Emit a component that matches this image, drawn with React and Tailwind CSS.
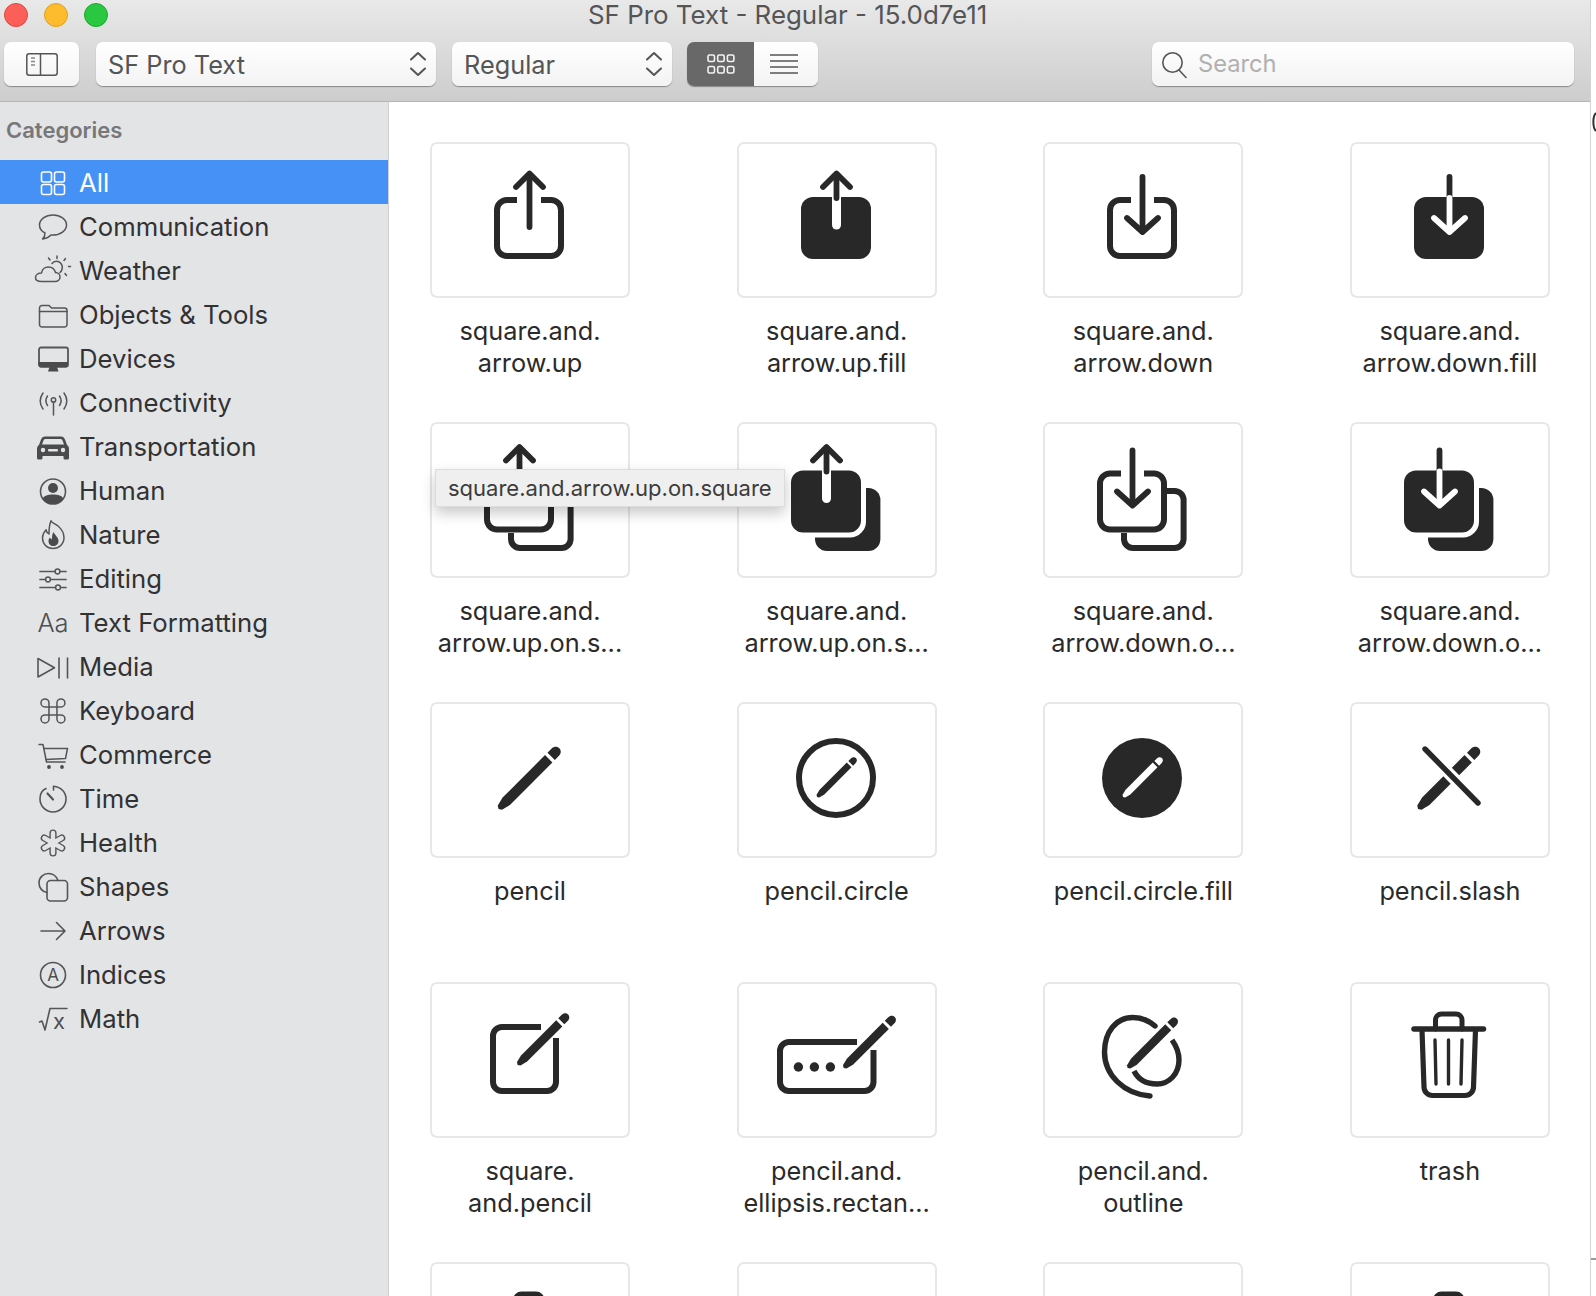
import React from "react";

const INK = "#282828";
const SIDE_BG = "#e3e4e6";

function Pencil({ x, y, s = 1, color = INK }) {
  return (
    <g transform={`translate(${x} ${y}) rotate(-45) scale(${s})`} fill={color}>
      <path d="M0 0 L2 -3 L11 -5.2 H71 V5.2 H11 L2 3 Z" />
      <path d="M74.5 -5.2 H80 C84 -5.2 86 -2.5 86 0 C86 2.5 84 5.2 80 5.2 H74.5 Z" />
    </g>
  );
}

function OpenSquare({ gapL, gapR }) {
  return (
    <path
      d={`M${gapL} 58 H77 a10 10 0 0 0 -10 10 V104 a10 10 0 0 0 10 10 H121 a10 10 0 0 0 10 -10 V68 a10 10 0 0 0 -10 -10 H${gapR}`}
      fill="none"
      stroke={INK}
      strokeWidth="6"
    />
  );
}

function ArrowUp({ color = INK }) {
  return (
    <g fill="none" stroke={color} strokeWidth="5.8" strokeLinecap="round" strokeLinejoin="round">
      <path d="M99.5 85 V33" />
      <path d="M86 45 L99.5 31.5 L113 45" />
    </g>
  );
}

function ArrowDown({ color = INK, stemTop = 35 }) {
  return (
    <g fill="none" stroke={color} strokeWidth="5.8" strokeLinecap="round" strokeLinejoin="round">
      <path d={`M99.5 ${stemTop} V88`} />
      <path d="M84 76 L99.5 90 L115 76" />
    </g>
  );
}

function UpFill() {
  return (
    <g>
      <rect x="64" y="55" width="70" height="62" rx="12" fill={INK} />
      <path d="M99.5 50 V83" stroke="#fff" strokeWidth="9" strokeLinecap="round" />
      <path d="M99.5 56 V34" stroke={INK} strokeWidth="5.8" strokeLinecap="round" />
      <path d="M86 45 L99.5 31.5 L113 45" fill="none" stroke={INK} strokeWidth="5.8" strokeLinecap="round" strokeLinejoin="round" />
    </g>
  );
}

function DownFill() {
  return (
    <g>
      <rect x="64" y="55" width="70" height="62" rx="12" fill={INK} />
      <path d="M99.5 35 V55" stroke={INK} strokeWidth="5.8" strokeLinecap="round" />
      <path d="M99.5 56 V88" stroke="#fff" strokeWidth="5.8" strokeLinecap="round" />
      <path d="M84 76 L99.5 90 L115 76" fill="none" stroke="#fff" strokeWidth="5.8" strokeLinecap="round" strokeLinejoin="round" />
    </g>
  );
}

function BackOutline() {
  return (
    <path
      d="M81 111 V117 a9 9 0 0 0 9 9 H131.6 a9 9 0 0 0 9 -9 V78 a9 9 0 0 0 -9 -9 H124"
      fill="none"
      stroke={INK}
      strokeWidth="6"
    />
  );
}

function BackFill() {
  return (
    <g>
      <rect x="78" y="66" width="65.4" height="63" rx="12" fill={INK} />
      <rect x="49.5" y="43.5" width="79.5" height="72" rx="16" fill="#fff" />
    </g>
  );
}

function Trash() {
  return (
    <g fill="none" stroke={INK} strokeLinecap="round">
      <path d="M85.5 47 V38 a6 6 0 0 1 6 -6 H106 a6 6 0 0 1 6 6 V47" strokeWidth="5" />
      <path d="M64 47 H133.5" strokeWidth="5.5" />
      <path d="M72 48 L74 105 a8.5 8.5 0 0 0 8.5 8.5 H115 a8.5 8.5 0 0 0 8.5 -8.5 L125.5 48" strokeWidth="5.2" />
      <path d="M85 58 L86 102 M98.5 58 V102 M112 58 L111 102" strokeWidth="3.4" />
    </g>
  );
}

const cards = [
  {
    lines: ["square.and.", "arrow.up"],
    icon: (
      <g>
        <OpenSquare gapL={87} gapR={111} />
        <ArrowUp />
      </g>
    ),
  },
  { lines: ["square.and.", "arrow.up.fill"], icon: <UpFill /> },
  {
    lines: ["square.and.", "arrow.down"],
    icon: (
      <g>
        <OpenSquare gapL={88} gapR={111} />
        <ArrowDown />
      </g>
    ),
  },
  { lines: ["square.and.", "arrow.down.fill"], icon: <DownFill /> },
  {
    lines: ["square.and.", "arrow.up.on.s..."],
    icon: (
      <g>
        <BackOutline />
        <g transform="translate(-10 -6.5)">
          <OpenSquare gapL={87} gapR={111} />
          <ArrowUp />
        </g>
      </g>
    ),
  },
  {
    lines: ["square.and.", "arrow.up.on.s..."],
    icon: (
      <g>
        <BackFill />
        <g transform="translate(-10 -6.5)">
          <UpFill />
        </g>
      </g>
    ),
  },
  {
    lines: ["square.and.", "arrow.down.o..."],
    icon: (
      <g>
        <BackOutline />
        <g transform="translate(-10 -6.5)">
          <OpenSquare gapL={88} gapR={111} />
          <ArrowDown />
        </g>
      </g>
    ),
  },
  {
    lines: ["square.and.", "arrow.down.o..."],
    icon: (
      <g>
        <BackFill />
        <g transform="translate(-10 -6.5)">
          <DownFill />
        </g>
      </g>
    ),
  },
  { lines: ["pencil"], icon: <Pencil x={68.5} y={107} /> },
  {
    lines: ["pencil.circle"],
    icon: (
      <g>
        <circle cx="99" cy="76" r="37" fill="none" stroke={INK} strokeWidth="6" />
        <Pencil x={80} y={95} s={0.64} />
      </g>
    ),
  },
  {
    lines: ["pencil.circle.fill"],
    icon: (
      <g>
        <circle cx="99" cy="76" r="40" fill={INK} />
        <Pencil x={80} y={95} s={0.64} color="#fff" />
      </g>
    ),
  },
  {
    lines: ["pencil.slash"],
    icon: (
      <g>
        <Pencil x={68} y={107} />
        <path d="M75 47 L128 101" stroke="#fff" strokeWidth="12" />
        <path d="M75 47 L128 101" stroke={INK} strokeWidth="5.4" strokeLinecap="round" />
      </g>
    ),
  },
  {
    lines: ["square.", "and.pencil"],
    icon: (
      <g>
        <path
          d="M111 45 H72 a9 9 0 0 0 -9 9 V100 a9 9 0 0 0 9 9 H117 a9 9 0 0 0 9 -9 V56"
          fill="none"
          stroke={INK}
          strokeWidth="6"
        />
        <Pencil x={87.6} y={83} s={0.83} />
      </g>
    ),
  },
  {
    lines: ["pencil.and.", "ellipsis.rectan..."],
    icon: (
      <g>
        <path
          d="M120 60 H52 a9 9 0 0 0 -9 9 V100 a9 9 0 0 0 9 9 H127.5 a9 9 0 0 0 9 -9 V68"
          fill="none"
          stroke={INK}
          strokeWidth="6"
        />
        <circle cx="61.4" cy="85" r="4.7" fill={INK} />
        <circle cx="77.4" cy="85" r="4.7" fill={INK} />
        <circle cx="93.4" cy="85" r="4.7" fill={INK} />
        <Pencil x={106.6} y={86} s={0.84} />
      </g>
    ),
  },
  {
    lines: ["pencil.and.", "outline"],
    icon: (
      <g>
        <path
          d="M112 44 C105 38 97 35.5 90 35.5 C73 35.5 61.5 50 61.5 70 C61.5 93 81 112 107 114"
          fill="none"
          stroke={INK}
          strokeWidth="5.4"
          strokeLinecap="round"
        />
        <path
          d="M129 58 C134 65 136 71 136 78 C136 92 126 102 114 102 C103 102 95 97 91 89"
          fill="none"
          stroke={INK}
          strokeWidth="5.4"
        />
        <Pencil x={84.6} y={86} s={0.81} />
      </g>
    ),
  },
  { lines: ["trash"], icon: <Trash /> },
  { lines: [""], icon: <Trash /> },
  { lines: [""], icon: null },
  { lines: [""], icon: null },
  { lines: [""], icon: <Trash /> },
];

function SideIcon({ children, fill = "none" }) {
  return (
    <svg
      viewBox="0 0 36 28"
      className="w-[36px] h-[28px] shrink-0 overflow-visible"
      fill={fill}
      stroke="#555557"
      strokeWidth="1.5"
      strokeLinecap="round"
      strokeLinejoin="round"
    >
      {children}
    </svg>
  );
}

const categories = [
  {
    name: "All",
    active: true,
    icon: (
      <g stroke="#fff" strokeWidth="1.6">
        <rect x="6.5" y="3" width="10" height="10" rx="2" />
        <rect x="19.5" y="3" width="10" height="10" rx="2" />
        <rect x="6.5" y="15.5" width="10" height="10" rx="2" />
        <rect x="19.5" y="15.5" width="10" height="10" rx="2" />
      </g>
    ),
  },
  {
    name: "Communication",
    icon: <path d="M18 2 C10.5 2 4.5 6.5 4.5 12 C4.5 15.5 7 18.5 10 20 C10 22 9 24.5 7.5 26 C11 25.8 14 24 16 22 C16.6 22 17.4 22 18 22 C25.5 22 31.5 17.5 31.5 12 C31.5 6.5 25.5 2 18 2 Z" />,
  },
  {
    name: "Weather",
    icon: (
      <g>
        <path d="M6.5 24.5 H20 C23 24.5 25 22.5 25 20 C25 17.5 23 15.5 20.5 15.5 C19.5 12 16.5 10 13.5 10 C10 10 7 12.5 6.5 16 C3 16 0.5 18 0.5 20.5 C0.5 23 3 24.5 6.5 24.5 Z" />
        <path d="M17 6.5 C18.5 4.5 21 4 23 4.5 C26.5 5.5 28 9 27 12.5 C26.7 13.5 26 14.5 25 15.5" />
        <path d="M22 -1 V1.5 M13.5 1 L15 3 M30.5 1.5 L29 3.5 M33.5 9.5 H35.5 M30 16.5 L31.5 18.5" />
      </g>
    ),
  },
  {
    name: "Objects & Tools",
    icon: (
      <g>
        <path d="M4.5 7 a2.5 2.5 0 0 1 2.5 -2.5 h7 l2.5 2.5 h13 a2.5 2.5 0 0 1 2.5 2.5 v14 a2.5 2.5 0 0 1 -2.5 2.5 h-22.5 a2.5 2.5 0 0 1 -2.5 -2.5 Z" />
        <path d="M4.5 10.5 H32" />
      </g>
    ),
  },
  {
    name: "Devices",
    icon: (
      <g>
        <rect x="4" y="2.5" width="29" height="19" rx="2" strokeWidth="1.8" />
        <path d="M3.5 17 H33 V20 a2.5 2.5 0 0 1 -2.5 2.5 H6 a2.5 2.5 0 0 1 -2.5 -2.5 Z" fill="#4b4b4d" stroke="none" />
        <path d="M14.5 22 L13 26.5 H23.5 L22 22 Z" fill="#4b4b4d" stroke="none" />
      </g>
    ),
  },
  {
    name: "Connectivity",
    icon: (
      <g>
        <circle cx="18.5" cy="11" r="2.2" />
        <path d="M18.5 13 V26" />
        <path d="M12.5 7 C10.5 10 10.5 13.5 12.5 16.5 M24.5 7 C26.5 10 26.5 13.5 24.5 16.5" />
        <path d="M8 4 C4.5 9 4.5 15 8 20 M29 4 C32.5 9 32.5 15 29 20" />
      </g>
    ),
  },
  {
    name: "Transportation",
    icon: (
      <g stroke="none">
        <path d="M10 3.5 H26 C28 3.5 29 4.5 30 6.5 L32 12 C33.5 13 34 14.5 34 16 V25 a1.5 1.5 0 0 1 -1.5 1.5 H30 a1.5 1.5 0 0 1 -1.5 -1.5 V23 H7.5 V25 a1.5 1.5 0 0 1 -1.5 1.5 H3.5 a1.5 1.5 0 0 1 -1.5 -1.5 V16 C2 14.5 2.5 13 4 12 L6 6.5 C7 4.5 8 3.5 10 3.5 Z" fill="#4b4b4d" />
        <path d="M10.5 6 H25.5 C26.5 6 27 6.5 27.5 7.5 L29 11.5 H7 L8.5 7.5 C9 6.5 9.5 6 10.5 6 Z" fill={SIDE_BG} />
        <circle cx="8" cy="17" r="2.2" fill={SIDE_BG} />
        <circle cx="28" cy="17" r="2.2" fill={SIDE_BG} />
        <rect x="13" y="16" width="10" height="2.5" rx="1" fill={SIDE_BG} />
      </g>
    ),
  },
  {
    name: "Human",
    icon: (
      <g>
        <circle cx="18" cy="14.5" r="12.5" strokeWidth="1.6" />
        <circle cx="18" cy="11" r="5" fill="#4b4b4d" stroke="none" />
        <path d="M7.5 22 C9 18.5 13 17.5 18 17.5 C23 17.5 27 18.5 28.5 22 C26 25.5 22 27 18 27 C14 27 10 25.5 7.5 22 Z" fill="#4b4b4d" stroke="none" />
      </g>
    ),
  },
  {
    name: "Nature",
    icon: (
      <g>
        <path d="M16 0 C17 2 20 2.5 23 5 C26.5 8 29 11.5 29 16.5 C29 23 24 27.5 18 27.5 C12 27.5 7.5 23 7.5 17 C7.5 13.5 9 11 11 9" />
        <path d="M11 9 C11.5 11 12.5 12 14 13 C14 8 14 4 16 0" />
        <path d="M18.5 11 C19.5 14 23.5 16 23.5 20 C23.5 23 21 25 18.5 25 C15.5 25 13.5 23 13.5 20 C13.5 18.5 14 17.5 15 16.5 C15.5 17.5 16 18 17 18.5 C17 16 17 13 18.5 11 Z" fill="#4b4b4d" stroke="none" />
      </g>
    ),
  },
  {
    name: "Editing",
    icon: (
      <g>
        <path d="M5 6.5 H31 M5 14.5 H31 M5 22.5 H31" strokeWidth="1.7" />
        <circle cx="22.5" cy="6.5" r="2.4" fill={SIDE_BG} />
        <circle cx="13" cy="14.5" r="2.4" fill={SIDE_BG} />
        <circle cx="23" cy="22.5" r="2.4" fill={SIDE_BG} />
      </g>
    ),
  },
  {
    name: "Text Formatting",
    icon: (
      <text x="18" y="23" textAnchor="middle" fontFamily="Inter, sans-serif" fontSize="25.5" fontWeight="300" fill="#4f4f52" stroke="none">
        Aa
      </text>
    ),
  },
  {
    name: "Media",
    icon: (
      <g strokeWidth="1.6">
        <path d="M3 5.5 V24 L19.5 14.7 Z" />
        <path d="M24 5 V25 M32.5 5 V25" />
      </g>
    ),
  },
  {
    name: "Keyboard",
    icon: (
      <g transform="translate(2 -2) scale(1.33)" strokeWidth="1.15">
        <path d="M15 6v12a3 3 0 1 0 3-3H6a3 3 0 1 0 3 3V6a3 3 0 1 0-3 3h12a3 3 0 1 0-3-3" />
      </g>
    ),
  },
  {
    name: "Commerce",
    icon: (
      <g>
        <path d="M4 3.5 H8 L11.5 21 H30" />
        <path d="M9 7.5 H32.5 L30.5 17.5 L11 18.5" />
        <circle cx="14" cy="26" r="1.9" fill="#4b4b4d" stroke="none" />
        <circle cx="27" cy="26" r="1.9" fill="#4b4b4d" stroke="none" />
      </g>
    ),
  },
  {
    name: "Time",
    icon: (
      <g strokeWidth="1.6">
        <path d="M11 3.5 C6.5 5.5 5 10 5 14 C5 21 10.8 27 18 27 C25.2 27 31 21 31 14 C31 7.5 26.5 2 18.5 1.2 V5" />
        <path d="M18 14.5 L12.5 8.5" strokeWidth="2.2" />
      </g>
    ),
  },
  {
    name: "Health",
    icon: (
      <g fill="none">
        <g stroke="#555557" strokeWidth="7.2">
          <path d="M18 4 V24 M9.3 9 L26.7 19 M26.7 9 L9.3 19" />
        </g>
        <g stroke={SIDE_BG} strokeWidth="4.4">
          <path d="M18 4 V24 M9.3 9 L26.7 19 M26.7 9 L9.3 19" />
        </g>
      </g>
    ),
  },
  {
    name: "Shapes",
    icon: (
      <g strokeWidth="1.6">
        <path d="M12 19.5 C7.5 18.8 4 15 4 10 C4 4.5 8.5 0.5 13.5 0.5 C18 0.5 21.5 3.5 23 7.5" />
        <rect x="12" y="7.5" width="20.5" height="20.5" rx="3.5" />
      </g>
    ),
  },
  {
    name: "Arrows",
    icon: <path d="M6 14 H30 M21.5 5.5 L30 14 L21.5 22.5" strokeWidth="1.6" />,
  },
  {
    name: "Indices",
    icon: (
      <g>
        <circle cx="18" cy="14" r="12.5" strokeWidth="1.6" />
        <text x="18" y="20" textAnchor="middle" fontFamily="Inter, sans-serif" fontSize="17" fill="#4f4f52" stroke="none">
          A
        </text>
      </g>
    ),
  },
  {
    name: "Math",
    icon: (
      <g>
        <path d="M4.5 17 L7 16 L10 25 L15 3.5 H32" strokeWidth="1.6" />
        <text x="24" y="23.5" textAnchor="middle" fontFamily="Inter, sans-serif" fontSize="22" fill="#4f4f52" stroke="none">
          x
        </text>
      </g>
    ),
  },
];

function Chevrons() {
  return (
    <svg viewBox="0 0 18 24" className="w-[18px] h-[24px]" fill="none" stroke="#555" strokeWidth="2" strokeLinecap="round" strokeLinejoin="round">
      <path d="M2 7.5 L9 1 L16 7.5" />
      <path d="M2 16.5 L9 23 L16 16.5" />
    </svg>
  );
}

function SelectBox({ label, width }) {
  return (
    <div className={`${width} h-[44px] bg-gradient-to-b from-white to-[#f3f3f3] rounded-[7px] shadow-[0_1px_1px_rgba(0,0,0,0.35)] flex items-center justify-between pl-[12px] pr-[9px]`}>
      <span className="mt-[2px] text-[25.3px] text-[#555]">{label}</span>
      <Chevrons />
    </div>
  );
}

function Toolbar() {
  return (
    <div className="h-[102px] shrink-0 bg-gradient-to-b from-[#e9e9e9] to-[#cdcdcd] border-b border-[#b4b4b4] flex flex-col">
      <div className="h-[30px] flex items-center pl-[4px] gap-[16px]">
        <span className="w-[24px] h-[24px] rounded-full bg-[#fc5f57] border border-[#e0443e]" />
        <span className="w-[24px] h-[24px] rounded-full bg-[#fdbc2e] border border-[#dea123]" />
        <span className="w-[24px] h-[24px] rounded-full bg-[#29c840] border border-[#1aab29]" />
        <span className="ml-[464px] text-[25.9px] leading-[30px] text-[#555] whitespace-nowrap">SF Pro Text - Regular - 15.0d7e11</span>
      </div>
      <div className="mt-[12px] flex items-center pl-[4px]">
        <div className="w-[75px] h-[44px] bg-gradient-to-b from-white to-[#f3f3f3] rounded-[7px] shadow-[0_1px_1px_rgba(0,0,0,0.35)] flex items-center justify-center">
          <svg viewBox="0 0 32 23" className="w-[32px] h-[23px]" fill="none" stroke="#555" strokeWidth="1.5">
            <rect x="0.8" y="0.8" width="30.4" height="21.4" rx="2.5" />
            <path d="M14.5 1 V22" />
            <path d="M5 5 H9 M5 8.5 H9 M5 12 H9" strokeWidth="1.6" stroke="#888" />
          </svg>
        </div>
        <div className="ml-[17px]">
          <SelectBox label="SF Pro Text" width="w-[340px]" />
        </div>
        <div className="ml-[16px]">
          <SelectBox label="Regular" width="w-[220px]" />
        </div>
        <div className="ml-[15px] w-[131px] h-[44px] flex rounded-[7px] shadow-[0_1px_1px_rgba(0,0,0,0.35)] overflow-hidden">
          <div className="w-[67px] bg-[#686868] flex items-center justify-center">
            <svg viewBox="0 0 28 20" className="w-[28px] h-[20px]" fill="none" stroke="#f2f2f2" strokeWidth="1.6">
              <rect x="1" y="1" width="6.5" height="6.5" rx="1.5" />
              <rect x="10.7" y="1" width="6.5" height="6.5" rx="1.5" />
              <rect x="20.4" y="1" width="6.5" height="6.5" rx="1.5" />
              <rect x="1" y="12.5" width="6.5" height="6.5" rx="1.5" />
              <rect x="10.7" y="12.5" width="6.5" height="6.5" rx="1.5" />
              <rect x="20.4" y="12.5" width="6.5" height="6.5" rx="1.5" />
            </svg>
          </div>
          <div className="flex-1 bg-gradient-to-b from-white to-[#f3f3f3] flex items-center justify-center pr-[4px]">
            <svg viewBox="0 0 28 20" className="w-[28px] h-[20px]" fill="none" stroke="#555" strokeWidth="1.6">
              <path d="M0 1 H28 M0 7 H28 M0 13 H28 M0 19 H28" />
            </svg>
          </div>
        </div>
        <div className="ml-[334px] w-[422px] h-[44px] bg-gradient-to-b from-white to-[#f3f3f3] rounded-[7px] shadow-[0_1px_1px_rgba(0,0,0,0.35)] flex items-center pl-[10px]">
          <svg viewBox="0 0 25 25" className="w-[25px] h-[25px] overflow-visible" fill="none" stroke="#555" strokeWidth="1.6" strokeLinecap="round">
            <circle cx="10.5" cy="10.5" r="9.7" />
            <path d="M17 18 L24 25.5" />
          </svg>
          <span className="ml-[11px] text-[23.7px] text-[#b0b0b0]">Search</span>
        </div>
      </div>
    </div>
  );
}

function Sidebar() {
  return (
    <aside className="w-[389px] shrink-0 bg-[#e3e4e6] border-r border-[#cfcfd1]">
      <div className="h-[58px] pt-[13px] pl-[6px] text-[22px] leading-[30px] font-semibold text-[#77777a]">Categories</div>
      {categories.map((c) => (
        <div
          key={c.name}
          className={c.active ? "h-[44px] pt-[2px] flex items-center pl-[35px] bg-[#4591f6] text-white" : "h-[44px] pt-[2px] flex items-center pl-[35px] text-[#323234]"}
        >
          <SideIcon>{c.icon}</SideIcon>
          <span className="ml-[8px] text-[25.7px] leading-[30px] whitespace-nowrap">{c.name}</span>
        </div>
      ))}
    </aside>
  );
}

function Card({ card }) {
  return (
    <div className="h-[280px]">
      <div className="w-[200px] h-[156px] rounded-[7px] border-2 border-[#e7e7e7] bg-white overflow-hidden">
        <svg viewBox="2 2 196 152" className="w-[196px] h-[152px] block">
          {card.icon}
        </svg>
      </div>
      <div className="mt-[17px] text-center text-[25.3px] leading-[31.5px] text-[#2a2a2a]">
        {card.lines.map((l, i) => (
          <div key={i} className="whitespace-nowrap">
            {l}
          </div>
        ))}
      </div>
    </div>
  );
}

export default function App() {
  return (
    <div className="w-[1596px] h-[1296px] overflow-hidden flex bg-white [font-family:Inter,sans-serif]">
      <div className="w-[1590px] shrink-0 flex flex-col">
        <Toolbar />
        <div className="flex-1 min-h-0 flex">
          <Sidebar />
          <main className="relative flex-1 min-w-0 overflow-hidden pt-[40px] pl-[41px] bg-white">
            <div className="grid grid-cols-[repeat(4,200px)] gap-x-[106.67px]">
              {cards.map((c, i) => (
                <Card key={i} card={c} />
              ))}
            </div>
            <div className="absolute left-[46px] top-[367px] w-[350px] h-[38px] bg-[#efefef] border border-[#dcdcdc] shadow-[0_6px_14px_rgba(0,0,0,0.22)] flex items-center pl-[12px] text-[22px] text-[#3c3c3c] whitespace-nowrap">
              square.and.arrow.up.on.square
            </div>
          </main>
        </div>
      </div>
      <div className="flex-1 border-l border-[#d4d4d4] pt-[112px] overflow-hidden">
        <svg viewBox="0 0 5 20" className="w-[5px] h-[20px] block" fill="none" stroke="#333" strokeWidth="2">
          <path d="M5 1 C1.5 4 1.5 16 5 19" />
        </svg>
        <div className="mt-[1126px] h-[2px] bg-[#9a9a9a]" />
      </div>
    </div>
  );
}
